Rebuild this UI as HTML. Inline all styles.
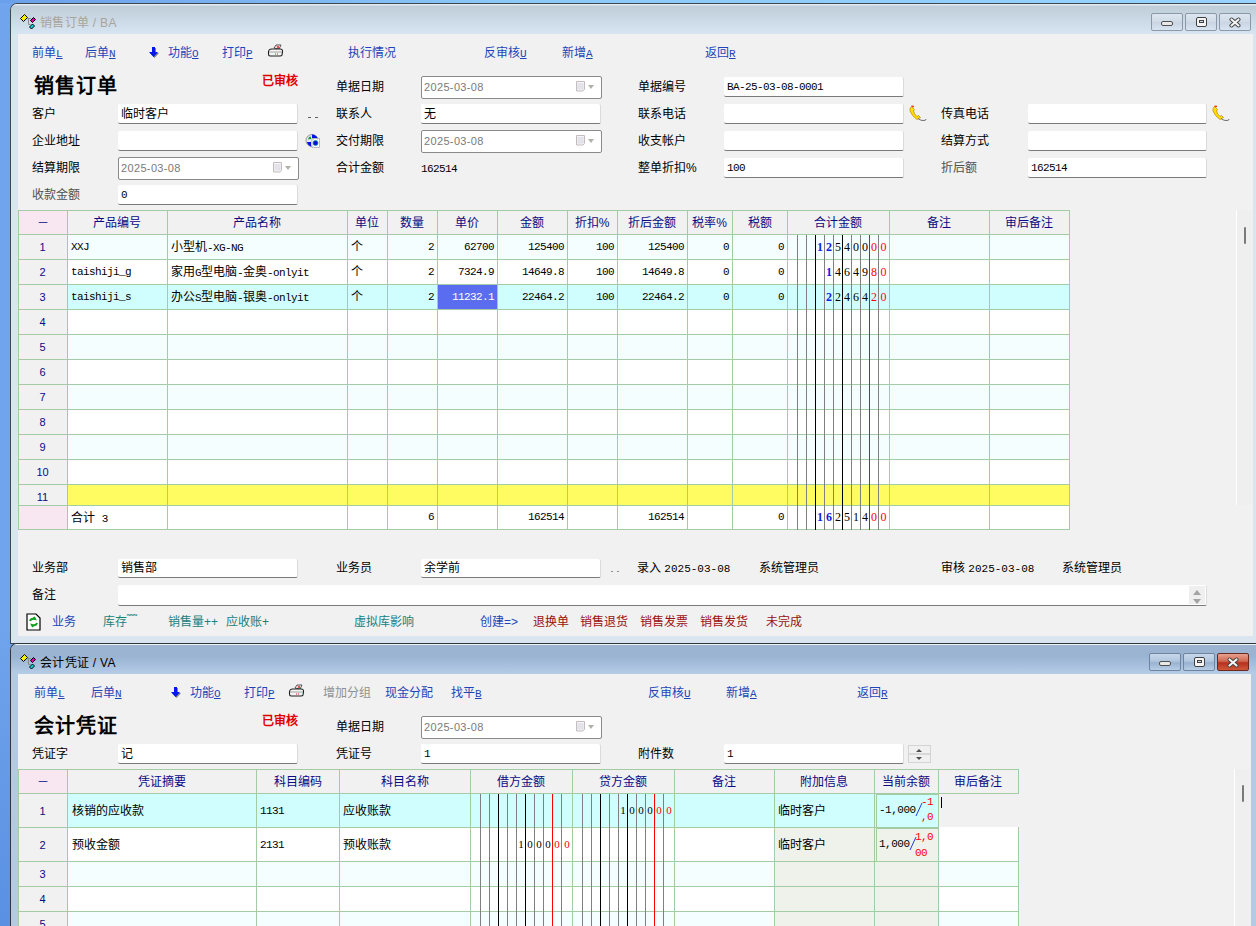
<!DOCTYPE html><html lang="zh-CN"><head><meta charset="utf-8"><style>
*{margin:0;padding:0;box-sizing:border-box}
html,body{width:1256px;height:926px;overflow:hidden}
body{position:relative;background:linear-gradient(#70a4ec 0,#70a4ec 620px,#5a90e2 926px);font-family:"Liberation Sans",sans-serif;font-size:12px;color:#000}
div{position:absolute}
.t{white-space:nowrap;line-height:14px}
.lnk{color:#1d45b8}
.teal{color:#1a8080}
.red{color:#9a1010}
.tb{background:#fff;border-bottom:1px solid #7a7a7a;border-right:1px solid #dadada;border-radius:2px}
.db{background:#fff;border:1px solid #8a8a8a;border-radius:2px}
.mono{font-family:"Liberation Mono",monospace;font-size:11px}
.g{border-color:#9cc49c;border-style:solid;border-width:0}
</style></head><body>
<div class="" style="left:0px;top:0px;width:1256px;height:3px;background:linear-gradient(90deg,#6aa0ea,#8cc8f8 40%,#98d4ff)"></div>
<div class="" style="left:10px;top:3px;width:1252px;height:641px;background:#dbe5f0;border:1px solid #3e4650;border-top-left-radius:7px;border-right:none"></div>
<div class="" style="left:11px;top:4px;width:1246px;height:30px;background:linear-gradient(#e2eaf2 0,#e2eaf2 1px,#bfcdd9 2px,#d7e4f1 30px);border-top-left-radius:6px"></div>
<div class="" style="left:18px;top:34px;width:1235px;height:602px;background:#f1f1f1"></div>
<svg style="position:absolute;left:19px;top:13px" width="18" height="18" viewBox="0 0 18 18"><path d="M8.5 5.5 H12 M9.5 5.5 V11.5 H11.5" stroke="#8a8a8a" stroke-width="1" fill="none"/><path d="M1.5 5.5 L5.5 1.5 L8.5 4.5 L4.5 8.5 Z" fill="#f8f000" stroke="#000" stroke-width="1"/><path d="M11.5 7.5 L14.5 4.5 L16.5 6.5 L13.5 9.5 Z" fill="#e000a0" stroke="#000" stroke-width="1"/><path d="M10.5 14 L13.5 11 L15.5 13 L12.5 16 Z" fill="#00d8e0" stroke="#000" stroke-width="1"/></svg>
<div class="t" style="left:40px;top:15px;font-size:12px;color:#aaa49c;line-height:16px;letter-spacing:0.3px">销售订单 / BA</div>
<div style="left:1151px;top:13px;width:32px;height:18px;background:linear-gradient(#dde6f0,#cfdae6 50%,#c8d4e2 50%,#d8e4f0);border:1px solid #8a98a8;border-radius:2px">
<div style="left:9px;top:7px;width:12px;height:5px;background:#e8e8e8;border:1px solid #505050;border-radius:2px"></div>
</div>
<div style="left:1185px;top:13px;width:32px;height:18px;background:linear-gradient(#dde6f0,#cfdae6 50%,#c8d4e2 50%,#d8e4f0);border:1px solid #8a98a8;border-radius:2px">
<div style="left:10px;top:3px;width:11px;height:10px;background:#f4f4f4;border:1px solid #404040;border-radius:2px"><div style="left:2px;top:2px;width:5px;height:3px;border:1px solid #404040;background:#d0d8e8"></div></div>
</div>
<div style="left:1219px;top:13px;width:32px;height:18px;background:linear-gradient(#dde6f0,#cfdae6 50%,#c8d4e2 50%,#d8e4f0);border:1px solid #8a98a8;border-radius:2px">
<svg style="position:absolute;left:9px;top:3px" width="12" height="11" viewBox="0 0 12 11"><path d="M2.5 2.5 L9.5 8.5 M9.5 2.5 L2.5 8.5" stroke="#404040" stroke-width="4" stroke-linecap="round"/><path d="M2.5 2.5 L9.5 8.5 M9.5 2.5 L2.5 8.5" stroke="#f4f4f4" stroke-width="2.2" stroke-linecap="round"/></svg>
</div>
<div class="t lnk" style="left:32px;top:46px;">前单<span style="text-decoration:underline;font-family:'Liberation Mono',monospace;font-size:11px">L</span></div>
<div class="t lnk" style="left:85px;top:46px;">后单<span style="text-decoration:underline;font-family:'Liberation Mono',monospace;font-size:11px">N</span></div>
<svg style="position:absolute;left:149px;top:46px" width="11" height="12" viewBox="0 0 11 12"><path d="M3 1 H6 V6 H9 L4.5 11 L0 6 H3 Z" fill="#808080" transform="translate(1,1)"/><path d="M3 1 H6 V6 H9 L4.5 11 L0 6 H3 Z" fill="#0018f0"/></svg>
<div class="t lnk" style="left:168px;top:46px;">功能<span style="text-decoration:underline;font-family:'Liberation Mono',monospace;font-size:11px">O</span></div>
<div class="t lnk" style="left:222px;top:46px;">打印<span style="text-decoration:underline;font-family:'Liberation Mono',monospace;font-size:11px">P</span></div>
<svg style="position:absolute;left:267px;top:44px" width="17" height="13" viewBox="0 0 17 13"><path d="M7 4 L9 1 H14 L12 5 Z" fill="#fff" stroke="#404040" stroke-width="0.9"/><path d="M9.5 2 L12 4 M12 2 L9.5 4" stroke="#e02020" stroke-width="0.9"/><path d="M1.5 9 Q1 5 5 5 H13 Q16 5 15.5 8 L15 11 Q14.5 12 13 12 H3 Q1.5 12 1.5 10 Z" fill="#f4f4f4" stroke="#202020" stroke-width="1.1"/><path d="M2 8 H15" stroke="#909090" stroke-width="0.8"/><path d="M8 10 h1 M10 10 h1" stroke="#e02020" stroke-width="1"/></svg>
<div class="t lnk" style="left:348px;top:46px;">执行情况</div>
<div class="t lnk" style="left:484px;top:46px;">反审核<span style="text-decoration:underline;font-family:'Liberation Mono',monospace;font-size:11px">U</span></div>
<div class="t lnk" style="left:562px;top:46px;">新增<span style="text-decoration:underline;font-family:'Liberation Mono',monospace;font-size:11px">A</span></div>
<div class="t lnk" style="left:705px;top:46px;">返回<span style="text-decoration:underline;font-family:'Liberation Mono',monospace;font-size:11px">R</span></div>
<div class="t" style="left:34px;top:74px;font-family:'Liberation Serif',serif;font-size:20px;font-weight:bold;line-height:24px;letter-spacing:1px">销售订单</div>
<div class="t" style="left:262px;top:74px;color:#e00000;font-weight:bold;font-size:12px">已审核</div>
<div class="t" style="left:32px;top:107px;">客户</div>
<div class="tb" style="left:118px;top:104px;width:180px;height:20px;"><div class="t" style="left:3px;top:3px;">临时客户</div></div>
<div style="left:308px;top:117px;width:3px;height:1px;background:#606060"></div><div style="left:315px;top:117px;width:3px;height:1px;background:#606060"></div>
<div class="t" style="left:32px;top:134px;">企业地址</div>
<div class="tb" style="left:118px;top:131px;width:180px;height:20px;"></div>
<svg style="position:absolute;left:305px;top:133px" width="16" height="16" viewBox="0 0 16 16"><circle cx="7" cy="7.5" r="6" fill="#e8e8f0" stroke="#808080" stroke-width="0.8"/><path d="M7 1.5 A6 6 0 0 1 12.5 5 L7 5 Z" fill="#0010f0"/><path d="M2 9 A6 6 0 0 0 6 13.5 L6 9 Z" fill="#0010f0"/><path d="M4 4 L6 3.5 L6 6 L3 6.5Z" fill="#10a030"/><rect x="7" y="5.5" width="7.5" height="9" fill="#fff" stroke="#a0a0a0" stroke-width="0.7"/><circle cx="10.5" cy="10" r="2.5" fill="#0010d0" stroke="#10a0a0" stroke-width="0.8"/><path d="M8 6.5 h1 M12 6.5 h1 M8 14 h1 M12 14 h1" stroke="#f0f000" stroke-width="1"/></svg>
<div class="t" style="left:32px;top:161px;">结算期限</div>
<div class="db" style="left:118px;top:157px;width:181px;height:23px"><div class="t" style="left:2px;top:3px;color:#7a7a7a;font-size:11px;letter-spacing:0.35px">2025-03-08</div><svg style="position:absolute;left:153px;top:3px" width="11" height="12" viewBox="0 0 11 12"><path d="M1.5 1.5 H9.5 V9.5 L8 11 H1.5 Z" fill="#f4f6fa" stroke="#c4bcbc" stroke-width="1"/><rect x="2.5" y="3" width="6" height="6.5" fill="#dcdde4"/><path d="M3.5 4 h1 M5.5 4 h1 M7.5 4 h0.5 M3.5 6 h1 M5.5 6 h1 M7.5 6 h0.5 M3.5 8 h1 M5.5 8 h1" stroke="#fff" stroke-width="0.8"/></svg><div style="left:166px;top:8px;width:0;height:0;border-left:3.5px solid transparent;border-right:3.5px solid transparent;border-top:4px solid #b0b0a8"></div></div>
<div class="t" style="left:32px;top:188px;color:#505050">收款金额</div>
<div class="tb" style="left:118px;top:185px;width:180px;height:20px;"><div class="t" style="left:3px;top:3px;font-family:'Liberation Mono',monospace;font-size:11px;letter-spacing:-0.6px;">0</div></div>
<div class="t" style="left:336px;top:80px;">单据日期</div>
<div class="db" style="left:421px;top:76px;width:181px;height:23px"><div class="t" style="left:2px;top:3px;color:#7a7a7a;font-size:11px;letter-spacing:0.35px">2025-03-08</div><svg style="position:absolute;left:153px;top:3px" width="11" height="12" viewBox="0 0 11 12"><path d="M1.5 1.5 H9.5 V9.5 L8 11 H1.5 Z" fill="#f4f6fa" stroke="#c4bcbc" stroke-width="1"/><rect x="2.5" y="3" width="6" height="6.5" fill="#dcdde4"/><path d="M3.5 4 h1 M5.5 4 h1 M7.5 4 h0.5 M3.5 6 h1 M5.5 6 h1 M7.5 6 h0.5 M3.5 8 h1 M5.5 8 h1" stroke="#fff" stroke-width="0.8"/></svg><div style="left:166px;top:8px;width:0;height:0;border-left:3.5px solid transparent;border-right:3.5px solid transparent;border-top:4px solid #b0b0a8"></div></div>
<div class="t" style="left:336px;top:107px;">联系人</div>
<div class="tb" style="left:421px;top:104px;width:180px;height:20px;"><div class="t" style="left:3px;top:3px;">无</div></div>
<div class="t" style="left:336px;top:134px;">交付期限</div>
<div class="db" style="left:421px;top:130px;width:181px;height:23px"><div class="t" style="left:2px;top:3px;color:#7a7a7a;font-size:11px;letter-spacing:0.35px">2025-03-08</div><svg style="position:absolute;left:153px;top:3px" width="11" height="12" viewBox="0 0 11 12"><path d="M1.5 1.5 H9.5 V9.5 L8 11 H1.5 Z" fill="#f4f6fa" stroke="#c4bcbc" stroke-width="1"/><rect x="2.5" y="3" width="6" height="6.5" fill="#dcdde4"/><path d="M3.5 4 h1 M5.5 4 h1 M7.5 4 h0.5 M3.5 6 h1 M5.5 6 h1 M7.5 6 h0.5 M3.5 8 h1 M5.5 8 h1" stroke="#fff" stroke-width="0.8"/></svg><div style="left:166px;top:8px;width:0;height:0;border-left:3.5px solid transparent;border-right:3.5px solid transparent;border-top:4px solid #b0b0a8"></div></div>
<div class="t" style="left:336px;top:161px;">合计金额</div>
<div class="t" style="left:421px;top:162px;font-family:'Liberation Mono',monospace;font-size:11px;letter-spacing:-0.6px">162514</div>
<div class="t" style="left:638px;top:80px;">单据编号</div>
<div class="tb" style="left:724px;top:77px;width:180px;height:20px;"><div class="t" style="left:3px;top:3px;font-family:'Liberation Mono',monospace;font-size:11px;letter-spacing:-0.6px;">BA-25-03-08-0001</div></div>
<div class="t" style="left:638px;top:107px;">联系电话</div>
<div class="tb" style="left:724px;top:104px;width:180px;height:20px;"></div>
<div class="t" style="left:638px;top:134px;">收支帐户</div>
<div class="tb" style="left:724px;top:131px;width:180px;height:20px;"></div>
<div class="t" style="left:638px;top:161px;">整单折扣%</div>
<div class="tb" style="left:724px;top:158px;width:180px;height:20px;"><div class="t" style="left:3px;top:3px;font-family:'Liberation Mono',monospace;font-size:11px;letter-spacing:-0.6px;">100</div></div>
<svg style="position:absolute;left:909px;top:105px" width="20" height="18" viewBox="0 0 20 18"><path d="M2.5 1.5 Q0.5 3 1 6 Q3 11 8 14.5 L11.5 12.5 L9.5 10.5 L8 11.5 Q5 9 4.5 6 L5.5 4.5 Z" fill="#ffe000" stroke="#c08000" stroke-width="0.7"/><path d="M2.5 1.2 L5 1.5" stroke="#ff4000" stroke-width="1.5"/><path d="M9 13.5 Q12 16 15 15.5 Q17 15.5 17 14" stroke="#707070" stroke-width="1" fill="none"/></svg>
<div class="t" style="left:941px;top:107px;">传真电话</div>
<div class="tb" style="left:1028px;top:104px;width:179px;height:20px;"></div>
<svg style="position:absolute;left:1212px;top:105px" width="20" height="18" viewBox="0 0 20 18"><path d="M2.5 1.5 Q0.5 3 1 6 Q3 11 8 14.5 L11.5 12.5 L9.5 10.5 L8 11.5 Q5 9 4.5 6 L5.5 4.5 Z" fill="#ffe000" stroke="#c08000" stroke-width="0.7"/><path d="M2.5 1.2 L5 1.5" stroke="#ff4000" stroke-width="1.5"/><path d="M9 13.5 Q12 16 15 15.5 Q17 15.5 17 14" stroke="#707070" stroke-width="1" fill="none"/></svg>
<div class="t" style="left:941px;top:134px;">结算方式</div>
<div class="tb" style="left:1028px;top:131px;width:179px;height:20px;"></div>
<div class="t" style="left:941px;top:161px;color:#505050">折后额</div>
<div class="tb" style="left:1028px;top:158px;width:179px;height:20px;"><div class="t" style="left:3px;top:3px;font-family:'Liberation Mono',monospace;font-size:11px;letter-spacing:-0.6px;">162514</div></div>
<div style="left:18px;top:210px;width:49px;height:24px;background:#f8e6f0"></div>
<div style="left:67px;top:210px;width:100px;height:24px;background:#f1f1f1"></div>
<div style="left:167px;top:210px;width:180px;height:24px;background:#f1f1f1"></div>
<div style="left:347px;top:210px;width:40px;height:24px;background:#f1f1f1"></div>
<div style="left:387px;top:210px;width:50px;height:24px;background:#f1f1f1"></div>
<div style="left:437px;top:210px;width:60px;height:24px;background:#f1f1f1"></div>
<div style="left:497px;top:210px;width:70px;height:24px;background:#f1f1f1"></div>
<div style="left:567px;top:210px;width:50px;height:24px;background:#f1f1f1"></div>
<div style="left:617px;top:210px;width:70px;height:24px;background:#f1f1f1"></div>
<div style="left:687px;top:210px;width:45px;height:24px;background:#f1f1f1"></div>
<div style="left:732px;top:210px;width:55px;height:24px;background:#f1f1f1"></div>
<div style="left:787px;top:210px;width:102px;height:24px;background:#f1f1f1"></div>
<div style="left:889px;top:210px;width:100px;height:24px;background:#f1f1f1"></div>
<div style="left:989px;top:210px;width:80px;height:24px;background:#f1f1f1"></div>
<div style="left:18px;top:234px;width:49px;height:25px;background:#f1f1f1"></div>
<div style="left:67px;top:234px;width:100px;height:25px;background:#f4fefe"></div>
<div style="left:167px;top:234px;width:180px;height:25px;background:#f4fefe"></div>
<div style="left:347px;top:234px;width:40px;height:25px;background:#f4fefe"></div>
<div style="left:387px;top:234px;width:50px;height:25px;background:#f4fefe"></div>
<div style="left:437px;top:234px;width:60px;height:25px;background:#f4fefe"></div>
<div style="left:497px;top:234px;width:70px;height:25px;background:#f4fefe"></div>
<div style="left:567px;top:234px;width:50px;height:25px;background:#f4fefe"></div>
<div style="left:617px;top:234px;width:70px;height:25px;background:#f4fefe"></div>
<div style="left:687px;top:234px;width:45px;height:25px;background:#f4fefe"></div>
<div style="left:732px;top:234px;width:55px;height:25px;background:#f4fefe"></div>
<div style="left:787px;top:234px;width:102px;height:25px;background:#f4fefe"></div>
<div style="left:889px;top:234px;width:100px;height:25px;background:#f4fefe"></div>
<div style="left:989px;top:234px;width:80px;height:25px;background:#f4fefe"></div>
<div style="left:18px;top:259px;width:49px;height:25px;background:#f1f1f1"></div>
<div style="left:67px;top:259px;width:100px;height:25px;background:#ffffff"></div>
<div style="left:167px;top:259px;width:180px;height:25px;background:#ffffff"></div>
<div style="left:347px;top:259px;width:40px;height:25px;background:#ffffff"></div>
<div style="left:387px;top:259px;width:50px;height:25px;background:#ffffff"></div>
<div style="left:437px;top:259px;width:60px;height:25px;background:#ffffff"></div>
<div style="left:497px;top:259px;width:70px;height:25px;background:#ffffff"></div>
<div style="left:567px;top:259px;width:50px;height:25px;background:#ffffff"></div>
<div style="left:617px;top:259px;width:70px;height:25px;background:#ffffff"></div>
<div style="left:687px;top:259px;width:45px;height:25px;background:#ffffff"></div>
<div style="left:732px;top:259px;width:55px;height:25px;background:#ffffff"></div>
<div style="left:787px;top:259px;width:102px;height:25px;background:#ffffff"></div>
<div style="left:889px;top:259px;width:100px;height:25px;background:#ffffff"></div>
<div style="left:989px;top:259px;width:80px;height:25px;background:#ffffff"></div>
<div style="left:18px;top:284px;width:49px;height:25px;background:#f1f1f1"></div>
<div style="left:67px;top:284px;width:100px;height:25px;background:#d0fefe"></div>
<div style="left:167px;top:284px;width:180px;height:25px;background:#d0fefe"></div>
<div style="left:347px;top:284px;width:40px;height:25px;background:#d0fefe"></div>
<div style="left:387px;top:284px;width:50px;height:25px;background:#d0fefe"></div>
<div style="left:437px;top:284px;width:60px;height:25px;background:#d0fefe"></div>
<div style="left:497px;top:284px;width:70px;height:25px;background:#d0fefe"></div>
<div style="left:567px;top:284px;width:50px;height:25px;background:#d0fefe"></div>
<div style="left:617px;top:284px;width:70px;height:25px;background:#d0fefe"></div>
<div style="left:687px;top:284px;width:45px;height:25px;background:#d0fefe"></div>
<div style="left:732px;top:284px;width:55px;height:25px;background:#d0fefe"></div>
<div style="left:787px;top:284px;width:102px;height:25px;background:#d0fefe"></div>
<div style="left:889px;top:284px;width:100px;height:25px;background:#d0fefe"></div>
<div style="left:989px;top:284px;width:80px;height:25px;background:#d0fefe"></div>
<div style="left:18px;top:309px;width:49px;height:25px;background:#f1f1f1"></div>
<div style="left:67px;top:309px;width:100px;height:25px;background:#ffffff"></div>
<div style="left:167px;top:309px;width:180px;height:25px;background:#ffffff"></div>
<div style="left:347px;top:309px;width:40px;height:25px;background:#ffffff"></div>
<div style="left:387px;top:309px;width:50px;height:25px;background:#ffffff"></div>
<div style="left:437px;top:309px;width:60px;height:25px;background:#ffffff"></div>
<div style="left:497px;top:309px;width:70px;height:25px;background:#ffffff"></div>
<div style="left:567px;top:309px;width:50px;height:25px;background:#ffffff"></div>
<div style="left:617px;top:309px;width:70px;height:25px;background:#ffffff"></div>
<div style="left:687px;top:309px;width:45px;height:25px;background:#ffffff"></div>
<div style="left:732px;top:309px;width:55px;height:25px;background:#ffffff"></div>
<div style="left:787px;top:309px;width:102px;height:25px;background:#ffffff"></div>
<div style="left:889px;top:309px;width:100px;height:25px;background:#ffffff"></div>
<div style="left:989px;top:309px;width:80px;height:25px;background:#ffffff"></div>
<div style="left:18px;top:334px;width:49px;height:25px;background:#f1f1f1"></div>
<div style="left:67px;top:334px;width:100px;height:25px;background:#f4fefe"></div>
<div style="left:167px;top:334px;width:180px;height:25px;background:#f4fefe"></div>
<div style="left:347px;top:334px;width:40px;height:25px;background:#f4fefe"></div>
<div style="left:387px;top:334px;width:50px;height:25px;background:#f4fefe"></div>
<div style="left:437px;top:334px;width:60px;height:25px;background:#f4fefe"></div>
<div style="left:497px;top:334px;width:70px;height:25px;background:#f4fefe"></div>
<div style="left:567px;top:334px;width:50px;height:25px;background:#f4fefe"></div>
<div style="left:617px;top:334px;width:70px;height:25px;background:#f4fefe"></div>
<div style="left:687px;top:334px;width:45px;height:25px;background:#f4fefe"></div>
<div style="left:732px;top:334px;width:55px;height:25px;background:#f4fefe"></div>
<div style="left:787px;top:334px;width:102px;height:25px;background:#f4fefe"></div>
<div style="left:889px;top:334px;width:100px;height:25px;background:#f4fefe"></div>
<div style="left:989px;top:334px;width:80px;height:25px;background:#f4fefe"></div>
<div style="left:18px;top:359px;width:49px;height:25px;background:#f1f1f1"></div>
<div style="left:67px;top:359px;width:100px;height:25px;background:#ffffff"></div>
<div style="left:167px;top:359px;width:180px;height:25px;background:#ffffff"></div>
<div style="left:347px;top:359px;width:40px;height:25px;background:#ffffff"></div>
<div style="left:387px;top:359px;width:50px;height:25px;background:#ffffff"></div>
<div style="left:437px;top:359px;width:60px;height:25px;background:#ffffff"></div>
<div style="left:497px;top:359px;width:70px;height:25px;background:#ffffff"></div>
<div style="left:567px;top:359px;width:50px;height:25px;background:#ffffff"></div>
<div style="left:617px;top:359px;width:70px;height:25px;background:#ffffff"></div>
<div style="left:687px;top:359px;width:45px;height:25px;background:#ffffff"></div>
<div style="left:732px;top:359px;width:55px;height:25px;background:#ffffff"></div>
<div style="left:787px;top:359px;width:102px;height:25px;background:#ffffff"></div>
<div style="left:889px;top:359px;width:100px;height:25px;background:#ffffff"></div>
<div style="left:989px;top:359px;width:80px;height:25px;background:#ffffff"></div>
<div style="left:18px;top:384px;width:49px;height:25px;background:#f1f1f1"></div>
<div style="left:67px;top:384px;width:100px;height:25px;background:#f4fefe"></div>
<div style="left:167px;top:384px;width:180px;height:25px;background:#f4fefe"></div>
<div style="left:347px;top:384px;width:40px;height:25px;background:#f4fefe"></div>
<div style="left:387px;top:384px;width:50px;height:25px;background:#f4fefe"></div>
<div style="left:437px;top:384px;width:60px;height:25px;background:#f4fefe"></div>
<div style="left:497px;top:384px;width:70px;height:25px;background:#f4fefe"></div>
<div style="left:567px;top:384px;width:50px;height:25px;background:#f4fefe"></div>
<div style="left:617px;top:384px;width:70px;height:25px;background:#f4fefe"></div>
<div style="left:687px;top:384px;width:45px;height:25px;background:#f4fefe"></div>
<div style="left:732px;top:384px;width:55px;height:25px;background:#f4fefe"></div>
<div style="left:787px;top:384px;width:102px;height:25px;background:#f4fefe"></div>
<div style="left:889px;top:384px;width:100px;height:25px;background:#f4fefe"></div>
<div style="left:989px;top:384px;width:80px;height:25px;background:#f4fefe"></div>
<div style="left:18px;top:409px;width:49px;height:25px;background:#f1f1f1"></div>
<div style="left:67px;top:409px;width:100px;height:25px;background:#ffffff"></div>
<div style="left:167px;top:409px;width:180px;height:25px;background:#ffffff"></div>
<div style="left:347px;top:409px;width:40px;height:25px;background:#ffffff"></div>
<div style="left:387px;top:409px;width:50px;height:25px;background:#ffffff"></div>
<div style="left:437px;top:409px;width:60px;height:25px;background:#ffffff"></div>
<div style="left:497px;top:409px;width:70px;height:25px;background:#ffffff"></div>
<div style="left:567px;top:409px;width:50px;height:25px;background:#ffffff"></div>
<div style="left:617px;top:409px;width:70px;height:25px;background:#ffffff"></div>
<div style="left:687px;top:409px;width:45px;height:25px;background:#ffffff"></div>
<div style="left:732px;top:409px;width:55px;height:25px;background:#ffffff"></div>
<div style="left:787px;top:409px;width:102px;height:25px;background:#ffffff"></div>
<div style="left:889px;top:409px;width:100px;height:25px;background:#ffffff"></div>
<div style="left:989px;top:409px;width:80px;height:25px;background:#ffffff"></div>
<div style="left:18px;top:434px;width:49px;height:25px;background:#f1f1f1"></div>
<div style="left:67px;top:434px;width:100px;height:25px;background:#f4fefe"></div>
<div style="left:167px;top:434px;width:180px;height:25px;background:#f4fefe"></div>
<div style="left:347px;top:434px;width:40px;height:25px;background:#f4fefe"></div>
<div style="left:387px;top:434px;width:50px;height:25px;background:#f4fefe"></div>
<div style="left:437px;top:434px;width:60px;height:25px;background:#f4fefe"></div>
<div style="left:497px;top:434px;width:70px;height:25px;background:#f4fefe"></div>
<div style="left:567px;top:434px;width:50px;height:25px;background:#f4fefe"></div>
<div style="left:617px;top:434px;width:70px;height:25px;background:#f4fefe"></div>
<div style="left:687px;top:434px;width:45px;height:25px;background:#f4fefe"></div>
<div style="left:732px;top:434px;width:55px;height:25px;background:#f4fefe"></div>
<div style="left:787px;top:434px;width:102px;height:25px;background:#f4fefe"></div>
<div style="left:889px;top:434px;width:100px;height:25px;background:#f4fefe"></div>
<div style="left:989px;top:434px;width:80px;height:25px;background:#f4fefe"></div>
<div style="left:18px;top:459px;width:49px;height:25px;background:#f1f1f1"></div>
<div style="left:67px;top:459px;width:100px;height:25px;background:#ffffff"></div>
<div style="left:167px;top:459px;width:180px;height:25px;background:#ffffff"></div>
<div style="left:347px;top:459px;width:40px;height:25px;background:#ffffff"></div>
<div style="left:387px;top:459px;width:50px;height:25px;background:#ffffff"></div>
<div style="left:437px;top:459px;width:60px;height:25px;background:#ffffff"></div>
<div style="left:497px;top:459px;width:70px;height:25px;background:#ffffff"></div>
<div style="left:567px;top:459px;width:50px;height:25px;background:#ffffff"></div>
<div style="left:617px;top:459px;width:70px;height:25px;background:#ffffff"></div>
<div style="left:687px;top:459px;width:45px;height:25px;background:#ffffff"></div>
<div style="left:732px;top:459px;width:55px;height:25px;background:#ffffff"></div>
<div style="left:787px;top:459px;width:102px;height:25px;background:#ffffff"></div>
<div style="left:889px;top:459px;width:100px;height:25px;background:#ffffff"></div>
<div style="left:989px;top:459px;width:80px;height:25px;background:#ffffff"></div>
<div style="left:18px;top:484px;width:49px;height:21px;background:#f1f1f1"></div>
<div style="left:67px;top:484px;width:100px;height:21px;background:#fffc62"></div>
<div style="left:167px;top:484px;width:180px;height:21px;background:#fffc62"></div>
<div style="left:347px;top:484px;width:40px;height:21px;background:#fffc62"></div>
<div style="left:387px;top:484px;width:50px;height:21px;background:#fffc62"></div>
<div style="left:437px;top:484px;width:60px;height:21px;background:#fffc62"></div>
<div style="left:497px;top:484px;width:70px;height:21px;background:#fffc62"></div>
<div style="left:567px;top:484px;width:50px;height:21px;background:#fffc62"></div>
<div style="left:617px;top:484px;width:70px;height:21px;background:#fffc62"></div>
<div style="left:687px;top:484px;width:45px;height:21px;background:#fffc62"></div>
<div style="left:732px;top:484px;width:55px;height:21px;background:#fffc62"></div>
<div style="left:787px;top:484px;width:102px;height:21px;background:#fffc62"></div>
<div style="left:889px;top:484px;width:100px;height:21px;background:#fffc62"></div>
<div style="left:989px;top:484px;width:80px;height:21px;background:#fffc62"></div>
<div style="left:18px;top:505px;width:49px;height:24px;background:#f8e6f0"></div>
<div style="left:67px;top:505px;width:100px;height:24px;background:#ffffff"></div>
<div style="left:167px;top:505px;width:180px;height:24px;background:#ffffff"></div>
<div style="left:347px;top:505px;width:40px;height:24px;background:#ffffff"></div>
<div style="left:387px;top:505px;width:50px;height:24px;background:#ffffff"></div>
<div style="left:437px;top:505px;width:60px;height:24px;background:#ffffff"></div>
<div style="left:497px;top:505px;width:70px;height:24px;background:#ffffff"></div>
<div style="left:567px;top:505px;width:50px;height:24px;background:#ffffff"></div>
<div style="left:617px;top:505px;width:70px;height:24px;background:#ffffff"></div>
<div style="left:687px;top:505px;width:45px;height:24px;background:#ffffff"></div>
<div style="left:732px;top:505px;width:55px;height:24px;background:#ffffff"></div>
<div style="left:787px;top:505px;width:102px;height:24px;background:#ffffff"></div>
<div style="left:889px;top:505px;width:100px;height:24px;background:#ffffff"></div>
<div style="left:989px;top:505px;width:80px;height:24px;background:#ffffff"></div>
<div style="left:438px;top:285px;width:59px;height:24px;background:#5a6cf0"></div>
<div style="left:18px;top:210px;width:1px;height:320px;background:#a4cca4"></div>
<div style="left:67px;top:210px;width:1px;height:320px;background:#a4cca4"></div>
<div style="left:167px;top:210px;width:1px;height:320px;background:#a4cca4"></div>
<div style="left:347px;top:210px;width:1px;height:320px;background:#a4cca4"></div>
<div style="left:387px;top:210px;width:1px;height:320px;background:#a4cca4"></div>
<div style="left:437px;top:210px;width:1px;height:320px;background:#a4cca4"></div>
<div style="left:497px;top:210px;width:1px;height:320px;background:#a4cca4"></div>
<div style="left:567px;top:210px;width:1px;height:320px;background:#a4cca4"></div>
<div style="left:617px;top:210px;width:1px;height:320px;background:#a4cca4"></div>
<div style="left:687px;top:210px;width:1px;height:320px;background:#a4cca4"></div>
<div style="left:732px;top:210px;width:1px;height:320px;background:#a4cca4"></div>
<div style="left:787px;top:210px;width:1px;height:320px;background:#a4cca4"></div>
<div style="left:889px;top:210px;width:1px;height:320px;background:#a4cca4"></div>
<div style="left:989px;top:210px;width:1px;height:320px;background:#a4cca4"></div>
<div style="left:1069px;top:210px;width:1px;height:320px;background:#a4cca4"></div>
<div style="left:18px;top:210px;width:1052px;height:1px;background:#a4cca4"></div>
<div style="left:18px;top:234px;width:1052px;height:1px;background:#a4cca4"></div>
<div style="left:18px;top:259px;width:1052px;height:1px;background:#a4cca4"></div>
<div style="left:18px;top:284px;width:1052px;height:1px;background:#a4cca4"></div>
<div style="left:18px;top:309px;width:1052px;height:1px;background:#a4cca4"></div>
<div style="left:18px;top:334px;width:1052px;height:1px;background:#a4cca4"></div>
<div style="left:18px;top:359px;width:1052px;height:1px;background:#a4cca4"></div>
<div style="left:18px;top:384px;width:1052px;height:1px;background:#a4cca4"></div>
<div style="left:18px;top:409px;width:1052px;height:1px;background:#a4cca4"></div>
<div style="left:18px;top:434px;width:1052px;height:1px;background:#a4cca4"></div>
<div style="left:18px;top:459px;width:1052px;height:1px;background:#a4cca4"></div>
<div style="left:18px;top:484px;width:1052px;height:1px;background:#a4cca4"></div>
<div style="left:18px;top:505px;width:1052px;height:1px;background:#a4cca4"></div>
<div style="left:18px;top:529px;width:1052px;height:1px;background:#a4cca4"></div>
<div style="left:797px;top:235px;width:1px;height:295px;background:#808080"></div>
<div style="left:806px;top:235px;width:1px;height:295px;background:#808080"></div>
<div style="left:815px;top:235px;width:1px;height:295px;background:#000"></div>
<div style="left:824px;top:235px;width:1px;height:295px;background:#808080"></div>
<div style="left:833px;top:235px;width:1px;height:295px;background:#808080"></div>
<div style="left:842px;top:235px;width:1px;height:295px;background:#000"></div>
<div style="left:851px;top:235px;width:1px;height:295px;background:#808080"></div>
<div style="left:860px;top:235px;width:1px;height:295px;background:#808080"></div>
<div style="left:869px;top:235px;width:1px;height:295px;background:#ff0000"></div>
<div style="left:878px;top:235px;width:1px;height:295px;background:#808080"></div>
<div class="t" style="left:18px;top:216px;width:49px;text-align:center;color:#0a0a84">－</div>
<div class="t" style="left:67px;top:216px;width:100px;text-align:center;color:#0a0a84">产品编号</div>
<div class="t" style="left:167px;top:216px;width:180px;text-align:center;color:#0a0a84">产品名称</div>
<div class="t" style="left:347px;top:216px;width:40px;text-align:center;color:#0a0a84">单位</div>
<div class="t" style="left:387px;top:216px;width:50px;text-align:center;color:#0a0a84">数量</div>
<div class="t" style="left:437px;top:216px;width:60px;text-align:center;color:#0a0a84">单价</div>
<div class="t" style="left:497px;top:216px;width:70px;text-align:center;color:#0a0a84">金额</div>
<div class="t" style="left:567px;top:216px;width:50px;text-align:center;color:#0a0a84">折扣%</div>
<div class="t" style="left:617px;top:216px;width:70px;text-align:center;color:#0a0a84">折后金额</div>
<div class="t" style="left:687px;top:216px;width:45px;text-align:center;color:#0a0a84">税率%</div>
<div class="t" style="left:732px;top:216px;width:55px;text-align:center;color:#0a0a84">税额</div>
<div class="t" style="left:787px;top:216px;width:102px;text-align:center;color:#0a0a84">合计金额</div>
<div class="t" style="left:889px;top:216px;width:100px;text-align:center;color:#0a0a84">备注</div>
<div class="t" style="left:989px;top:216px;width:80px;text-align:center;color:#0a0a84">审后备注</div>
<div class="t" style="left:18px;top:240px;width:49px;text-align:center;color:#0a0a84;font-size:11px">1</div>
<div class="t" style="left:18px;top:265px;width:49px;text-align:center;color:#0a0a84;font-size:11px">2</div>
<div class="t" style="left:18px;top:290px;width:49px;text-align:center;color:#0a0a84;font-size:11px">3</div>
<div class="t" style="left:18px;top:315px;width:49px;text-align:center;color:#0a0a84;font-size:11px">4</div>
<div class="t" style="left:18px;top:340px;width:49px;text-align:center;color:#0a0a84;font-size:11px">5</div>
<div class="t" style="left:18px;top:365px;width:49px;text-align:center;color:#0a0a84;font-size:11px">6</div>
<div class="t" style="left:18px;top:390px;width:49px;text-align:center;color:#0a0a84;font-size:11px">7</div>
<div class="t" style="left:18px;top:415px;width:49px;text-align:center;color:#0a0a84;font-size:11px">8</div>
<div class="t" style="left:18px;top:440px;width:49px;text-align:center;color:#0a0a84;font-size:11px">9</div>
<div class="t" style="left:18px;top:465px;width:49px;text-align:center;color:#0a0a84;font-size:11px">10</div>
<div class="t" style="left:18px;top:490px;width:49px;text-align:center;color:#0a0a84;font-size:11px">11</div>
<div class="t" style="left:71px;top:240px;font-family:'Liberation Mono',monospace;font-size:11px;letter-spacing:-0.6px">XXJ</div>
<div class="t" style="left:171px;top:240px;">小型机<span style="font-family:'Liberation Mono',monospace;font-size:11px;letter-spacing:-0.6px">-XG-NG</span></div>
<div class="t" style="left:351px;top:240px;">个</div>
<div class="t" style="left:387px;top:240px;width:47px;text-align:right;font-family:'Liberation Mono',monospace;font-size:11px;letter-spacing:-0.6px">2</div>
<div class="t" style="left:437px;top:240px;width:57px;text-align:right;font-family:'Liberation Mono',monospace;font-size:11px;letter-spacing:-0.6px">62700</div>
<div class="t" style="left:497px;top:240px;width:67px;text-align:right;font-family:'Liberation Mono',monospace;font-size:11px;letter-spacing:-0.6px">125400</div>
<div class="t" style="left:567px;top:240px;width:47px;text-align:right;font-family:'Liberation Mono',monospace;font-size:11px;letter-spacing:-0.6px">100</div>
<div class="t" style="left:617px;top:240px;width:67px;text-align:right;font-family:'Liberation Mono',monospace;font-size:11px;letter-spacing:-0.6px">125400</div>
<div class="t" style="left:687px;top:240px;width:42px;text-align:right;font-family:'Liberation Mono',monospace;font-size:11px;letter-spacing:-0.6px">0</div>
<div class="t" style="left:732px;top:240px;width:52px;text-align:right;font-family:'Liberation Mono',monospace;font-size:11px;letter-spacing:-0.6px">0</div>
<div class="t" style="left:71px;top:265px;font-family:'Liberation Mono',monospace;font-size:11px;letter-spacing:-0.6px">taishiji_g</div>
<div class="t" style="left:171px;top:265px;">家用<span style="font-family:'Liberation Mono',monospace;font-size:11px;letter-spacing:-0.6px">G</span>型电脑<span style="font-family:'Liberation Mono',monospace;font-size:11px;letter-spacing:-0.6px">-</span>金奥<span style="font-family:'Liberation Mono',monospace;font-size:11px;letter-spacing:-0.6px">-onlyit</span></div>
<div class="t" style="left:351px;top:265px;">个</div>
<div class="t" style="left:387px;top:265px;width:47px;text-align:right;font-family:'Liberation Mono',monospace;font-size:11px;letter-spacing:-0.6px">2</div>
<div class="t" style="left:437px;top:265px;width:57px;text-align:right;font-family:'Liberation Mono',monospace;font-size:11px;letter-spacing:-0.6px">7324.9</div>
<div class="t" style="left:497px;top:265px;width:67px;text-align:right;font-family:'Liberation Mono',monospace;font-size:11px;letter-spacing:-0.6px">14649.8</div>
<div class="t" style="left:567px;top:265px;width:47px;text-align:right;font-family:'Liberation Mono',monospace;font-size:11px;letter-spacing:-0.6px">100</div>
<div class="t" style="left:617px;top:265px;width:67px;text-align:right;font-family:'Liberation Mono',monospace;font-size:11px;letter-spacing:-0.6px">14649.8</div>
<div class="t" style="left:687px;top:265px;width:42px;text-align:right;font-family:'Liberation Mono',monospace;font-size:11px;letter-spacing:-0.6px">0</div>
<div class="t" style="left:732px;top:265px;width:52px;text-align:right;font-family:'Liberation Mono',monospace;font-size:11px;letter-spacing:-0.6px">0</div>
<div class="t" style="left:71px;top:290px;font-family:'Liberation Mono',monospace;font-size:11px;letter-spacing:-0.6px">taishiji_s</div>
<div class="t" style="left:171px;top:290px;">办公<span style="font-family:'Liberation Mono',monospace;font-size:11px;letter-spacing:-0.6px">S</span>型电脑<span style="font-family:'Liberation Mono',monospace;font-size:11px;letter-spacing:-0.6px">-</span>银奥<span style="font-family:'Liberation Mono',monospace;font-size:11px;letter-spacing:-0.6px">-onlyit</span></div>
<div class="t" style="left:351px;top:290px;">个</div>
<div class="t" style="left:387px;top:290px;width:47px;text-align:right;font-family:'Liberation Mono',monospace;font-size:11px;letter-spacing:-0.6px">2</div>
<div class="t" style="left:437px;top:290px;width:57px;text-align:right;font-family:'Liberation Mono',monospace;font-size:11px;letter-spacing:-0.6px;color:#fff">11232.1</div>
<div class="t" style="left:497px;top:290px;width:67px;text-align:right;font-family:'Liberation Mono',monospace;font-size:11px;letter-spacing:-0.6px">22464.2</div>
<div class="t" style="left:567px;top:290px;width:47px;text-align:right;font-family:'Liberation Mono',monospace;font-size:11px;letter-spacing:-0.6px">100</div>
<div class="t" style="left:617px;top:290px;width:67px;text-align:right;font-family:'Liberation Mono',monospace;font-size:11px;letter-spacing:-0.6px">22464.2</div>
<div class="t" style="left:687px;top:290px;width:42px;text-align:right;font-family:'Liberation Mono',monospace;font-size:11px;letter-spacing:-0.6px">0</div>
<div class="t" style="left:732px;top:290px;width:52px;text-align:right;font-family:'Liberation Mono',monospace;font-size:11px;letter-spacing:-0.6px">0</div>
<div class="t" style="left:71px;top:511px">合计&nbsp;&nbsp;<span style="font-family:'Liberation Mono',monospace;font-size:11px;letter-spacing:-0.6px">3</span></div>
<div class="t" style="left:387px;top:510px;width:47px;text-align:right;font-family:'Liberation Mono',monospace;font-size:11px;letter-spacing:-0.6px">6</div>
<div class="t" style="left:497px;top:510px;width:67px;text-align:right;font-family:'Liberation Mono',monospace;font-size:11px;letter-spacing:-0.6px">162514</div>
<div class="t" style="left:617px;top:510px;width:67px;text-align:right;font-family:'Liberation Mono',monospace;font-size:11px;letter-spacing:-0.6px">162514</div>
<div class="t" style="left:732px;top:510px;width:52px;text-align:right;font-family:'Liberation Mono',monospace;font-size:11px;letter-spacing:-0.6px">0</div>
<div class="t" style="left:815px;top:240px;width:10px;text-align:center;color:#1020e0;font-weight:bold;font-family:'Liberation Serif',serif;font-size:12px">1</div>
<div class="t" style="left:824px;top:240px;width:10px;text-align:center;color:#1020e0;font-weight:bold;font-family:'Liberation Serif',serif;font-size:12px">2</div>
<div class="t" style="left:833px;top:240px;width:10px;text-align:center;color:#000;font-weight:normal;font-family:'Liberation Serif',serif;font-size:12px">5</div>
<div class="t" style="left:842px;top:240px;width:10px;text-align:center;color:#000;font-weight:normal;font-family:'Liberation Serif',serif;font-size:12px">4</div>
<div class="t" style="left:851px;top:240px;width:10px;text-align:center;color:#000;font-weight:normal;font-family:'Liberation Serif',serif;font-size:12px">0</div>
<div class="t" style="left:860px;top:240px;width:10px;text-align:center;color:#000;font-weight:normal;font-family:'Liberation Serif',serif;font-size:12px">0</div>
<div class="t" style="left:869px;top:240px;width:10px;text-align:center;color:#ff0000;font-weight:normal;font-family:'Liberation Serif',serif;font-size:12px">0</div>
<div class="t" style="left:878px;top:240px;width:11px;text-align:center;color:#ff0000;font-weight:normal;font-family:'Liberation Serif',serif;font-size:12px">0</div>
<div class="t" style="left:824px;top:265px;width:10px;text-align:center;color:#1020e0;font-weight:bold;font-family:'Liberation Serif',serif;font-size:12px">1</div>
<div class="t" style="left:833px;top:265px;width:10px;text-align:center;color:#000;font-weight:normal;font-family:'Liberation Serif',serif;font-size:12px">4</div>
<div class="t" style="left:842px;top:265px;width:10px;text-align:center;color:#000;font-weight:normal;font-family:'Liberation Serif',serif;font-size:12px">6</div>
<div class="t" style="left:851px;top:265px;width:10px;text-align:center;color:#000;font-weight:normal;font-family:'Liberation Serif',serif;font-size:12px">4</div>
<div class="t" style="left:860px;top:265px;width:10px;text-align:center;color:#000;font-weight:normal;font-family:'Liberation Serif',serif;font-size:12px">9</div>
<div class="t" style="left:869px;top:265px;width:10px;text-align:center;color:#ff0000;font-weight:normal;font-family:'Liberation Serif',serif;font-size:12px">8</div>
<div class="t" style="left:878px;top:265px;width:11px;text-align:center;color:#ff0000;font-weight:normal;font-family:'Liberation Serif',serif;font-size:12px">0</div>
<div class="t" style="left:824px;top:290px;width:10px;text-align:center;color:#1020e0;font-weight:bold;font-family:'Liberation Serif',serif;font-size:12px">2</div>
<div class="t" style="left:833px;top:290px;width:10px;text-align:center;color:#000;font-weight:normal;font-family:'Liberation Serif',serif;font-size:12px">2</div>
<div class="t" style="left:842px;top:290px;width:10px;text-align:center;color:#000;font-weight:normal;font-family:'Liberation Serif',serif;font-size:12px">4</div>
<div class="t" style="left:851px;top:290px;width:10px;text-align:center;color:#000;font-weight:normal;font-family:'Liberation Serif',serif;font-size:12px">6</div>
<div class="t" style="left:860px;top:290px;width:10px;text-align:center;color:#000;font-weight:normal;font-family:'Liberation Serif',serif;font-size:12px">4</div>
<div class="t" style="left:869px;top:290px;width:10px;text-align:center;color:#ff0000;font-weight:normal;font-family:'Liberation Serif',serif;font-size:12px">2</div>
<div class="t" style="left:878px;top:290px;width:11px;text-align:center;color:#ff0000;font-weight:normal;font-family:'Liberation Serif',serif;font-size:12px">0</div>
<div class="t" style="left:815px;top:510px;width:10px;text-align:center;color:#1020e0;font-weight:bold;font-family:'Liberation Serif',serif;font-size:12px">1</div>
<div class="t" style="left:824px;top:510px;width:10px;text-align:center;color:#1020e0;font-weight:bold;font-family:'Liberation Serif',serif;font-size:12px">6</div>
<div class="t" style="left:833px;top:510px;width:10px;text-align:center;color:#000;font-weight:normal;font-family:'Liberation Serif',serif;font-size:12px">2</div>
<div class="t" style="left:842px;top:510px;width:10px;text-align:center;color:#000;font-weight:normal;font-family:'Liberation Serif',serif;font-size:12px">5</div>
<div class="t" style="left:851px;top:510px;width:10px;text-align:center;color:#000;font-weight:normal;font-family:'Liberation Serif',serif;font-size:12px">1</div>
<div class="t" style="left:860px;top:510px;width:10px;text-align:center;color:#000;font-weight:normal;font-family:'Liberation Serif',serif;font-size:12px">4</div>
<div class="t" style="left:869px;top:510px;width:10px;text-align:center;color:#ff0000;font-weight:normal;font-family:'Liberation Serif',serif;font-size:12px">0</div>
<div class="t" style="left:878px;top:510px;width:11px;text-align:center;color:#ff0000;font-weight:normal;font-family:'Liberation Serif',serif;font-size:12px">0</div>
<div style="left:1236px;top:210px;width:1px;height:295px;background:#fff"></div>
<div style="left:1237px;top:210px;width:16px;height:295px;background:#efefef"></div>
<div style="left:1244px;top:227px;width:2px;height:17px;background:#7a7a7a;border-radius:1px"></div>
<div class="t" style="left:32px;top:561px;">业务部</div>
<div class="tb" style="left:118px;top:559px;width:180px;height:19px;"><div class="t" style="left:3px;top:2px;">销售部</div></div>
<div class="t" style="left:336px;top:561px;">业务员</div>
<div class="tb" style="left:421px;top:559px;width:180px;height:19px;"><div class="t" style="left:3px;top:2px;">余学前</div></div>
<div style="left:611px;top:571px;width:2px;height:1px;background:#909090"></div><div style="left:617px;top:571px;width:2px;height:1px;background:#909090"></div>
<div class="t" style="left:637px;top:561px;">录入 <span style="font-family:'Liberation Mono',monospace;font-size:11px">2025-03-08</span></div>
<div class="t" style="left:759px;top:561px;">系统管理员</div>
<div class="t" style="left:941px;top:561px;">审核 <span style="font-family:'Liberation Mono',monospace;font-size:11px">2025-03-08</span></div>
<div class="t" style="left:1062px;top:561px;">系统管理员</div>
<div class="t" style="left:32px;top:588px;">备注</div>
<div class="tb" style="left:118px;top:585px;width:1089px;height:21px"><div style="left:1071px;top:1px;width:16px;height:18px;background:#efefef"></div><div style="left:1075px;top:5px;width:0;height:0;border-left:4px solid transparent;border-right:4px solid transparent;border-bottom:5px solid #a4a4a4"></div><div style="left:1075px;top:14px;width:0;height:0;border-left:4px solid transparent;border-right:4px solid transparent;border-top:5px solid #a4a4a4"></div></div>
<svg style="position:absolute;left:26px;top:613px" width="15" height="18" viewBox="0 0 15 18"><path d="M1 1 H10 L14 5 V17 H1 Z" fill="#fff" stroke="#000" stroke-width="1.2"/><path d="M4 8 Q5 5 9 6 L8 4 M11 10 Q10 13 6 12 L7 14" stroke="#10a020" stroke-width="2" fill="none"/></svg>
<div class="t lnk" style="left:52px;top:615px;">业务</div>
<div class="t teal" style="left:103px;top:615px;">库存<span style="font-size:10px;position:relative;top:-4px">˜˜˜</span></div>
<div class="t teal" style="left:168px;top:615px;">销售量++</div>
<div class="t teal" style="left:226px;top:615px;">应收账+</div>
<div class="t teal" style="left:354px;top:615px;">虚拟库影响</div>
<div class="t lnk" style="left:480px;top:615px;">创建=></div>
<div class="t red" style="left:533px;top:615px;">退换单</div>
<div class="t red" style="left:580px;top:615px;">销售退货</div>
<div class="t red" style="left:640px;top:615px;">销售发票</div>
<div class="t red" style="left:700px;top:615px;">销售发货</div>
<div class="t red" style="left:766px;top:615px;">未完成</div>
<div class="" style="left:10px;top:643px;width:1252px;height:300px;background:#b4c9e2;border:1px solid #2e3640;border-top-left-radius:7px;border-right:none;border-bottom:none"></div>
<div class="" style="left:11px;top:644px;width:1245px;height:30px;background:linear-gradient(#f0f4f8 0,#f0f4f8 1px,#9cb4d0 1px,#9ab3d2 40%,#b5cce6 100%);border-top-left-radius:6px"></div>
<div class="" style="left:18px;top:674px;width:1233px;height:260px;background:#f1f1f1"></div>
<svg style="position:absolute;left:19px;top:653px" width="18" height="18" viewBox="0 0 18 18"><path d="M8.5 5.5 H12 M9.5 5.5 V11.5 H11.5" stroke="#8a8a8a" stroke-width="1" fill="none"/><path d="M1.5 5.5 L5.5 1.5 L8.5 4.5 L4.5 8.5 Z" fill="#f8f000" stroke="#000" stroke-width="1"/><path d="M11.5 7.5 L14.5 4.5 L16.5 6.5 L13.5 9.5 Z" fill="#e000a0" stroke="#000" stroke-width="1"/><path d="M10.5 14 L13.5 11 L15.5 13 L12.5 16 Z" fill="#00d8e0" stroke="#000" stroke-width="1"/></svg>
<div class="t" style="left:40px;top:655px;font-size:12px;color:#000;line-height:16px;letter-spacing:0.3px">会计凭证 / VA</div>
<div style="left:1149px;top:653px;width:32px;height:18px;background:linear-gradient(#c8d8ea,#b0c6de 45%,#98b2d0 55%,#b8cee6);border:1px solid #6e84a0;border-radius:2px">
<div style="left:9px;top:7px;width:12px;height:5px;background:#e8e8e8;border:1px solid #505050;border-radius:2px"></div>
</div>
<div style="left:1183px;top:653px;width:32px;height:18px;background:linear-gradient(#c8d8ea,#b0c6de 45%,#98b2d0 55%,#b8cee6);border:1px solid #6e84a0;border-radius:2px">
<div style="left:10px;top:3px;width:11px;height:10px;background:#f4f4f4;border:1px solid #404040;border-radius:2px"><div style="left:2px;top:2px;width:5px;height:3px;border:1px solid #404040;background:#d0d8e8"></div></div>
</div>
<div style="left:1217px;top:653px;width:32px;height:18px;background:linear-gradient(#e8a090,#d06850 45%,#b83020 55%,#d05838);border:1px solid #6a2820;border-radius:2px">
<svg style="position:absolute;left:9px;top:3px" width="12" height="11" viewBox="0 0 12 11"><path d="M2.5 2.5 L9.5 8.5 M9.5 2.5 L2.5 8.5" stroke="#404040" stroke-width="4" stroke-linecap="round"/><path d="M2.5 2.5 L9.5 8.5 M9.5 2.5 L2.5 8.5" stroke="#f4f4f4" stroke-width="2.2" stroke-linecap="round"/></svg>
</div>
<div class="t lnk" style="left:34px;top:686px;">前单<span style="text-decoration:underline;font-family:'Liberation Mono',monospace;font-size:11px">L</span></div>
<div class="t lnk" style="left:91px;top:686px;">后单<span style="text-decoration:underline;font-family:'Liberation Mono',monospace;font-size:11px">N</span></div>
<svg style="position:absolute;left:171px;top:686px" width="11" height="12" viewBox="0 0 11 12"><path d="M3 1 H6 V6 H9 L4.5 11 L0 6 H3 Z" fill="#808080" transform="translate(1,1)"/><path d="M3 1 H6 V6 H9 L4.5 11 L0 6 H3 Z" fill="#0018f0"/></svg>
<div class="t lnk" style="left:190px;top:686px;">功能<span style="text-decoration:underline;font-family:'Liberation Mono',monospace;font-size:11px">O</span></div>
<div class="t lnk" style="left:244px;top:686px;">打印<span style="text-decoration:underline;font-family:'Liberation Mono',monospace;font-size:11px">P</span></div>
<svg style="position:absolute;left:288px;top:684px" width="17" height="13" viewBox="0 0 17 13"><path d="M7 4 L9 1 H14 L12 5 Z" fill="#fff" stroke="#404040" stroke-width="0.9"/><path d="M9.5 2 L12 4 M12 2 L9.5 4" stroke="#e02020" stroke-width="0.9"/><path d="M1.5 9 Q1 5 5 5 H13 Q16 5 15.5 8 L15 11 Q14.5 12 13 12 H3 Q1.5 12 1.5 10 Z" fill="#f4f4f4" stroke="#202020" stroke-width="1.1"/><path d="M2 8 H15" stroke="#909090" stroke-width="0.8"/><path d="M8 10 h1 M10 10 h1" stroke="#e02020" stroke-width="1"/></svg>
<div class="t" style="left:323px;top:686px;color:#909090">增加分组</div>
<div class="t lnk" style="left:385px;top:686px;">现金分配</div>
<div class="t lnk" style="left:451px;top:686px;">找平<span style="text-decoration:underline;font-family:'Liberation Mono',monospace;font-size:11px">B</span></div>
<div class="t lnk" style="left:648px;top:686px;">反审核<span style="text-decoration:underline;font-family:'Liberation Mono',monospace;font-size:11px">U</span></div>
<div class="t lnk" style="left:726px;top:686px;">新增<span style="text-decoration:underline;font-family:'Liberation Mono',monospace;font-size:11px">A</span></div>
<div class="t lnk" style="left:857px;top:686px;">返回<span style="text-decoration:underline;font-family:'Liberation Mono',monospace;font-size:11px">R</span></div>
<div class="t" style="left:34px;top:714px;font-family:'Liberation Serif',serif;font-size:20px;font-weight:bold;line-height:24px;letter-spacing:1px">会计凭证</div>
<div class="t" style="left:262px;top:714px;color:#e00000;font-weight:bold">已审核</div>
<div class="t" style="left:336px;top:720px;">单据日期</div>
<div class="db" style="left:421px;top:716px;width:181px;height:23px"><div class="t" style="left:2px;top:3px;color:#7a7a7a;font-size:11px;letter-spacing:0.35px">2025-03-08</div><svg style="position:absolute;left:153px;top:3px" width="11" height="12" viewBox="0 0 11 12"><path d="M1.5 1.5 H9.5 V9.5 L8 11 H1.5 Z" fill="#f4f6fa" stroke="#c4bcbc" stroke-width="1"/><rect x="2.5" y="3" width="6" height="6.5" fill="#dcdde4"/><path d="M3.5 4 h1 M5.5 4 h1 M7.5 4 h0.5 M3.5 6 h1 M5.5 6 h1 M7.5 6 h0.5 M3.5 8 h1 M5.5 8 h1" stroke="#fff" stroke-width="0.8"/></svg><div style="left:166px;top:8px;width:0;height:0;border-left:3.5px solid transparent;border-right:3.5px solid transparent;border-top:4px solid #b0b0a8"></div></div>
<div class="t" style="left:32px;top:747px;">凭证字</div>
<div class="tb" style="left:118px;top:744px;width:180px;height:20px;"><div class="t" style="left:3px;top:3px;">记</div></div>
<div class="t" style="left:336px;top:747px;">凭证号</div>
<div class="tb" style="left:421px;top:744px;width:180px;height:20px;"><div class="t" style="left:3px;top:3px;font-family:'Liberation Mono',monospace;font-size:11px;letter-spacing:-0.6px;">1</div></div>
<div class="t" style="left:638px;top:747px;">附件数</div>
<div class="tb" style="left:724px;top:744px;width:180px;height:20px;"><div class="t" style="left:3px;top:3px;font-family:'Liberation Mono',monospace;font-size:11px;letter-spacing:-0.6px;">1</div></div>
<div style="left:908px;top:745px;width:23px;height:18px;border:1px solid #d4d4d4;background:#f0f0f0"><div style="left:7px;top:3px;width:0;height:0;border-left:3.5px solid transparent;border-right:3.5px solid transparent;border-bottom:3px solid #505050"></div><div style="left:0px;top:7px;width:21px;height:2px;background:#d8d8d8"></div><div style="left:7px;top:11px;width:0;height:0;border-left:3.5px solid transparent;border-right:3.5px solid transparent;border-top:3px solid #505050"></div></div>
<div style="left:18px;top:769px;width:49px;height:24px;background:#f8e6f0"></div>
<div style="left:67px;top:769px;width:189px;height:24px;background:#f1f1f1"></div>
<div style="left:256px;top:769px;width:83px;height:24px;background:#f1f1f1"></div>
<div style="left:339px;top:769px;width:131px;height:24px;background:#f1f1f1"></div>
<div style="left:470px;top:769px;width:102px;height:24px;background:#f1f1f1"></div>
<div style="left:572px;top:769px;width:102px;height:24px;background:#f1f1f1"></div>
<div style="left:674px;top:769px;width:100px;height:24px;background:#f1f1f1"></div>
<div style="left:774px;top:769px;width:100px;height:24px;background:#f1f1f1"></div>
<div style="left:874px;top:769px;width:64px;height:24px;background:#f1f1f1"></div>
<div style="left:938px;top:769px;width:80px;height:24px;background:#f1f1f1"></div>
<div style="left:18px;top:793px;width:49px;height:34px;background:#f1f1f1"></div>
<div style="left:67px;top:793px;width:189px;height:34px;background:#d0fefe"></div>
<div style="left:256px;top:793px;width:83px;height:34px;background:#d0fefe"></div>
<div style="left:339px;top:793px;width:131px;height:34px;background:#d0fefe"></div>
<div style="left:470px;top:793px;width:102px;height:34px;background:#d0fefe"></div>
<div style="left:572px;top:793px;width:102px;height:34px;background:#d0fefe"></div>
<div style="left:674px;top:793px;width:100px;height:34px;background:#d0fefe"></div>
<div style="left:774px;top:793px;width:100px;height:34px;background:#d0fefe"></div>
<div style="left:874px;top:793px;width:64px;height:34px;background:#d0fefe"></div>
<div style="left:938px;top:793px;width:80px;height:34px;background:#f1f1f1"></div>
<div style="left:18px;top:827px;width:49px;height:34px;background:#f1f1f1"></div>
<div style="left:67px;top:827px;width:189px;height:34px;background:#ffffff"></div>
<div style="left:256px;top:827px;width:83px;height:34px;background:#ffffff"></div>
<div style="left:339px;top:827px;width:131px;height:34px;background:#ffffff"></div>
<div style="left:470px;top:827px;width:102px;height:34px;background:#ffffff"></div>
<div style="left:572px;top:827px;width:102px;height:34px;background:#ffffff"></div>
<div style="left:674px;top:827px;width:100px;height:34px;background:#ffffff"></div>
<div style="left:774px;top:827px;width:100px;height:34px;background:#eef2ea"></div>
<div style="left:874px;top:827px;width:64px;height:34px;background:#eef2ea"></div>
<div style="left:938px;top:827px;width:80px;height:34px;background:#ffffff"></div>
<div style="left:18px;top:861px;width:49px;height:25px;background:#f1f1f1"></div>
<div style="left:67px;top:861px;width:189px;height:25px;background:#f4fefe"></div>
<div style="left:256px;top:861px;width:83px;height:25px;background:#f4fefe"></div>
<div style="left:339px;top:861px;width:131px;height:25px;background:#f4fefe"></div>
<div style="left:470px;top:861px;width:102px;height:25px;background:#f4fefe"></div>
<div style="left:572px;top:861px;width:102px;height:25px;background:#f4fefe"></div>
<div style="left:674px;top:861px;width:100px;height:25px;background:#f4fefe"></div>
<div style="left:774px;top:861px;width:100px;height:25px;background:#eef2ea"></div>
<div style="left:874px;top:861px;width:64px;height:25px;background:#eef2ea"></div>
<div style="left:938px;top:861px;width:80px;height:25px;background:#f4fefe"></div>
<div style="left:18px;top:886px;width:49px;height:25px;background:#f1f1f1"></div>
<div style="left:67px;top:886px;width:189px;height:25px;background:#ffffff"></div>
<div style="left:256px;top:886px;width:83px;height:25px;background:#ffffff"></div>
<div style="left:339px;top:886px;width:131px;height:25px;background:#ffffff"></div>
<div style="left:470px;top:886px;width:102px;height:25px;background:#ffffff"></div>
<div style="left:572px;top:886px;width:102px;height:25px;background:#ffffff"></div>
<div style="left:674px;top:886px;width:100px;height:25px;background:#ffffff"></div>
<div style="left:774px;top:886px;width:100px;height:25px;background:#eef2ea"></div>
<div style="left:874px;top:886px;width:64px;height:25px;background:#eef2ea"></div>
<div style="left:938px;top:886px;width:80px;height:25px;background:#ffffff"></div>
<div style="left:18px;top:911px;width:49px;height:25px;background:#f1f1f1"></div>
<div style="left:67px;top:911px;width:189px;height:25px;background:#f4fefe"></div>
<div style="left:256px;top:911px;width:83px;height:25px;background:#f4fefe"></div>
<div style="left:339px;top:911px;width:131px;height:25px;background:#f4fefe"></div>
<div style="left:470px;top:911px;width:102px;height:25px;background:#f4fefe"></div>
<div style="left:572px;top:911px;width:102px;height:25px;background:#f4fefe"></div>
<div style="left:674px;top:911px;width:100px;height:25px;background:#f4fefe"></div>
<div style="left:774px;top:911px;width:100px;height:25px;background:#eef2ea"></div>
<div style="left:874px;top:911px;width:64px;height:25px;background:#eef2ea"></div>
<div style="left:938px;top:911px;width:80px;height:25px;background:#f4fefe"></div>
<div style="left:18px;top:769px;width:1px;height:170px;background:#a4cca4"></div>
<div style="left:67px;top:769px;width:1px;height:170px;background:#a4cca4"></div>
<div style="left:256px;top:769px;width:1px;height:170px;background:#a4cca4"></div>
<div style="left:339px;top:769px;width:1px;height:170px;background:#a4cca4"></div>
<div style="left:470px;top:769px;width:1px;height:170px;background:#a4cca4"></div>
<div style="left:572px;top:769px;width:1px;height:170px;background:#a4cca4"></div>
<div style="left:674px;top:769px;width:1px;height:170px;background:#a4cca4"></div>
<div style="left:774px;top:769px;width:1px;height:170px;background:#a4cca4"></div>
<div style="left:874px;top:769px;width:1px;height:170px;background:#a4cca4"></div>
<div style="left:938px;top:769px;width:1px;height:170px;background:#a4cca4"></div>
<div style="left:1018px;top:769px;width:1px;height:25px;background:#a4cca4"></div>
<div style="left:1018px;top:827px;width:1px;height:110px;background:#a4cca4"></div>
<div style="left:18px;top:769px;width:1001px;height:1px;background:#a4cca4"></div>
<div style="left:18px;top:793px;width:1001px;height:1px;background:#a4cca4"></div>
<div style="left:18px;top:827px;width:921px;height:1px;background:#a4cca4"></div>
<div style="left:18px;top:861px;width:1001px;height:1px;background:#a4cca4"></div>
<div style="left:18px;top:886px;width:1001px;height:1px;background:#a4cca4"></div>
<div style="left:18px;top:911px;width:1001px;height:1px;background:#a4cca4"></div>
<div style="left:18px;top:936px;width:1001px;height:1px;background:#a4cca4"></div>
<div style="left:876px;top:794px;width:63px;height:34px;border:1px solid #a4cca4"></div>
<div style="left:876px;top:828px;width:63px;height:34px;border:1px solid #a4cca4"></div>
<div style="left:480px;top:794px;width:1px;height:145px;background:#808080"></div>
<div style="left:489px;top:794px;width:1px;height:145px;background:#808080"></div>
<div style="left:498px;top:794px;width:1px;height:145px;background:#000"></div>
<div style="left:507px;top:794px;width:1px;height:145px;background:#808080"></div>
<div style="left:516px;top:794px;width:1px;height:145px;background:#808080"></div>
<div style="left:525px;top:794px;width:1px;height:145px;background:#000"></div>
<div style="left:534px;top:794px;width:1px;height:145px;background:#808080"></div>
<div style="left:543px;top:794px;width:1px;height:145px;background:#808080"></div>
<div style="left:552px;top:794px;width:1px;height:145px;background:#ff0000"></div>
<div style="left:561px;top:794px;width:1px;height:145px;background:#808080"></div>
<div style="left:582px;top:794px;width:1px;height:145px;background:#808080"></div>
<div style="left:591px;top:794px;width:1px;height:145px;background:#808080"></div>
<div style="left:600px;top:794px;width:1px;height:145px;background:#000"></div>
<div style="left:609px;top:794px;width:1px;height:145px;background:#808080"></div>
<div style="left:618px;top:794px;width:1px;height:145px;background:#808080"></div>
<div style="left:627px;top:794px;width:1px;height:145px;background:#000"></div>
<div style="left:636px;top:794px;width:1px;height:145px;background:#808080"></div>
<div style="left:645px;top:794px;width:1px;height:145px;background:#808080"></div>
<div style="left:654px;top:794px;width:1px;height:145px;background:#ff0000"></div>
<div style="left:663px;top:794px;width:1px;height:145px;background:#808080"></div>
<div class="t" style="left:18px;top:775px;width:49px;text-align:center;color:#0a0a84">－</div>
<div class="t" style="left:67px;top:775px;width:189px;text-align:center;color:#0a0a84">凭证摘要</div>
<div class="t" style="left:256px;top:775px;width:83px;text-align:center;color:#0a0a84">科目编码</div>
<div class="t" style="left:339px;top:775px;width:131px;text-align:center;color:#0a0a84">科目名称</div>
<div class="t" style="left:470px;top:775px;width:102px;text-align:center;color:#0a0a84">借方金额</div>
<div class="t" style="left:572px;top:775px;width:102px;text-align:center;color:#0a0a84">贷方金额</div>
<div class="t" style="left:674px;top:775px;width:100px;text-align:center;color:#0a0a84">备注</div>
<div class="t" style="left:774px;top:775px;width:100px;text-align:center;color:#0a0a84">附加信息</div>
<div class="t" style="left:874px;top:775px;width:64px;text-align:center;color:#0a0a84">当前余额</div>
<div class="t" style="left:938px;top:775px;width:80px;text-align:center;color:#0a0a84">审后备注</div>
<div class="t" style="left:18px;top:804px;width:49px;text-align:center;color:#0a0a84;font-size:11px">1</div>
<div class="t" style="left:18px;top:838px;width:49px;text-align:center;color:#0a0a84;font-size:11px">2</div>
<div class="t" style="left:18px;top:867px;width:49px;text-align:center;color:#0a0a84;font-size:11px">3</div>
<div class="t" style="left:18px;top:892px;width:49px;text-align:center;color:#0a0a84;font-size:11px">4</div>
<div class="t" style="left:18px;top:917px;width:49px;text-align:center;color:#0a0a84;font-size:11px">5</div>
<div class="t" style="left:72px;top:804px;">核销的应收款</div>
<div class="t" style="left:260px;top:804px;font-family:'Liberation Mono',monospace;font-size:11px;letter-spacing:-0.6px">1131</div>
<div class="t" style="left:343px;top:804px;">应收账款</div>
<div class="t" style="left:778px;top:804px;">临时客户</div>
<div class="t" style="left:72px;top:838px;">预收金额</div>
<div class="t" style="left:260px;top:838px;font-family:'Liberation Mono',monospace;font-size:11px;letter-spacing:-0.6px">2131</div>
<div class="t" style="left:343px;top:838px;">预收账款</div>
<div class="t" style="left:778px;top:838px;">临时客户</div>
<div class="t" style="left:618px;top:803px;width:10px;text-align:center;color:#000;font-family:'Liberation Serif',serif;font-size:11px">1</div>
<div class="t" style="left:627px;top:803px;width:10px;text-align:center;color:#000;font-family:'Liberation Serif',serif;font-size:11px">0</div>
<div class="t" style="left:636px;top:803px;width:10px;text-align:center;color:#000;font-family:'Liberation Serif',serif;font-size:11px">0</div>
<div class="t" style="left:645px;top:803px;width:10px;text-align:center;color:#000;font-family:'Liberation Serif',serif;font-size:11px">0</div>
<div class="t" style="left:654px;top:803px;width:10px;text-align:center;color:#ff0000;font-family:'Liberation Serif',serif;font-size:11px">0</div>
<div class="t" style="left:663px;top:803px;width:12px;text-align:center;color:#ff0000;font-family:'Liberation Serif',serif;font-size:11px">0</div>
<div class="t" style="left:516px;top:837px;width:10px;text-align:center;color:#000;font-family:'Liberation Serif',serif;font-size:11px">1</div>
<div class="t" style="left:525px;top:837px;width:10px;text-align:center;color:#000;font-family:'Liberation Serif',serif;font-size:11px">0</div>
<div class="t" style="left:534px;top:837px;width:10px;text-align:center;color:#000;font-family:'Liberation Serif',serif;font-size:11px">0</div>
<div class="t" style="left:543px;top:837px;width:10px;text-align:center;color:#000;font-family:'Liberation Serif',serif;font-size:11px">0</div>
<div class="t" style="left:552px;top:837px;width:10px;text-align:center;color:#ff0000;font-family:'Liberation Serif',serif;font-size:11px">0</div>
<div class="t" style="left:561px;top:837px;width:12px;text-align:center;color:#ff0000;font-family:'Liberation Serif',serif;font-size:11px">0</div>
<div class="t" style="left:879px;top:803px;font-family:'Liberation Mono',monospace;font-size:11px;letter-spacing:-0.6px;letter-spacing:-0.5px">-1,000</div>
<svg style="position:absolute;left:915px;top:800px" width="8" height="18"><path d="M1 16 L7 3" stroke="#2040e0" stroke-width="1"/></svg>
<div class="t" style="left:917px;top:795px;font-family:'Liberation Mono',monospace;font-size:11px;letter-spacing:-0.6px;color:#f00;width:16px;text-align:right">-1</div>
<div class="t" style="left:917px;top:810px;font-family:'Liberation Mono',monospace;font-size:11px;letter-spacing:-0.6px;color:#f00;width:16px;text-align:right">,0</div>
<div class="t" style="left:879px;top:837px;font-family:'Liberation Mono',monospace;font-size:11px;letter-spacing:-0.6px;letter-spacing:-0.5px">1,000</div>
<svg style="position:absolute;left:909px;top:834px" width="8" height="18"><path d="M1 16 L7 3" stroke="#2040e0" stroke-width="1"/></svg>
<div class="t" style="left:915px;top:830px;font-family:'Liberation Mono',monospace;font-size:11px;letter-spacing:-0.6px;color:#f00">1,0</div>
<div class="t" style="left:915px;top:846px;font-family:'Liberation Mono',monospace;font-size:11px;letter-spacing:-0.6px;color:#f00">00</div>
<div style="left:941px;top:797px;width:1px;height:11px;background:#000"></div>
<div style="left:1234px;top:769px;width:1px;height:160px;background:#fff"></div>
<div style="left:1235px;top:769px;width:16px;height:160px;background:#efefef"></div>
<div style="left:1242px;top:785px;width:2px;height:17px;background:#7a7a7a;border-radius:1px"></div>
</body></html>
